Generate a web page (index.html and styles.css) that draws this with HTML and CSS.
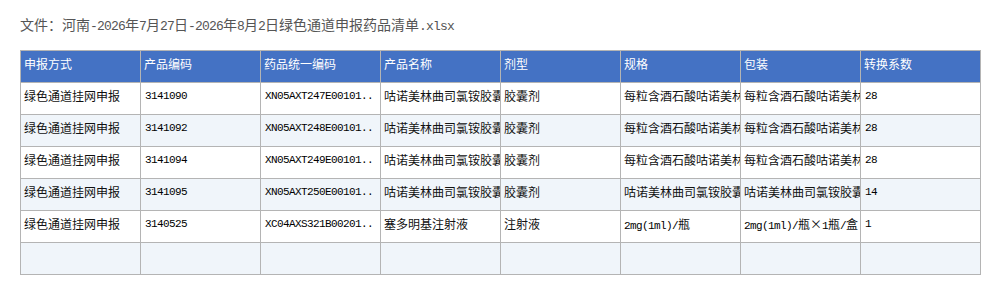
FILE: index.html
```html
<!DOCTYPE html>
<html lang="zh-CN">
<head>
<meta charset="utf-8">
<link rel="stylesheet" href="styles.css">
</head>
<body>
<div class="title">文件：河南<span class="m">-2026</span>年<span class="m">7</span>月<span class="m">27</span>日<span class="m">-2026</span>年<span class="m">8</span>月<span class="m">2</span>日绿色通道申报药品清单<span class="m">.xlsx</span></div>
<table class="grid">
<colgroup><col><col><col><col><col><col><col><col></colgroup>
<thead>
<tr><th>申报方式</th><th>产品编码</th><th>药品统一编码</th><th>产品名称</th><th>剂型</th><th>规格</th><th>包装</th><th>转换系数</th></tr>
</thead>
<tbody>
<tr><td>绿色通道挂网申报</td><td class="n">3141090</td><td class="n">XN05AXT247E00101..</td><td>咕诺美林曲司氯铵胶囊</td><td>胶囊剂</td><td>每粒含酒石酸咕诺美林</td><td>每粒含酒石酸咕诺美林</td><td class="n">28</td></tr>
<tr><td>绿色通道挂网申报</td><td class="n">3141092</td><td class="n">XN05AXT248E00101..</td><td>咕诺美林曲司氯铵胶囊</td><td>胶囊剂</td><td>每粒含酒石酸咕诺美林</td><td>每粒含酒石酸咕诺美林</td><td class="n">28</td></tr>
<tr><td>绿色通道挂网申报</td><td class="n">3141094</td><td class="n">XN05AXT249E00101..</td><td>咕诺美林曲司氯铵胶囊</td><td>胶囊剂</td><td>每粒含酒石酸咕诺美林</td><td>每粒含酒石酸咕诺美林</td><td class="n">28</td></tr>
<tr><td>绿色通道挂网申报</td><td class="n">3141095</td><td class="n">XN05AXT250E00101..</td><td>咕诺美林曲司氯铵胶囊</td><td>胶囊剂</td><td>咕诺美林曲司氯铵胶囊</td><td>咕诺美林曲司氯铵胶囊</td><td class="n">14</td></tr>
<tr><td>绿色通道挂网申报</td><td class="n">3140525</td><td class="n">XC04AXS321B00201..</td><td>塞多明基注射液</td><td>注射液</td><td><span class="m">2mg(1ml)/</span>瓶</td><td><span class="m">2mg(1ml)/</span>瓶×<span class="m">1</span>瓶<span class="m">/</span>盒</td><td class="n">1</td></tr>
<tr><td></td><td></td><td></td><td></td><td></td><td></td><td></td><td></td></tr>
</tbody>
</table>
</body>
</html>
```
FILE: styles.css
```css
html, body {
  margin: 0;
  padding: 0;
  background: #ffffff;
}
body {
  padding: 12px 20px;
  font-family: "Noto Sans CJK SC", "Noto Sans", sans-serif;
}
.title {
  font-size: 14px;
  line-height: 24px;
  height: 24px;
  color: #555555;
  margin-bottom: 14px;
  white-space: nowrap;
}
.title .m {
  font-family: "Liberation Mono", monospace;
  font-size: 13px;
  letter-spacing: -0.8px;
  line-height: 1;
}
.grid {
  border-collapse: collapse;
  table-layout: fixed;
  width: 961px;
}
.grid col {
  width: 120px;
}
.grid th,
.grid td {
  border: 1px solid #b4b4b4;
  height: 23px;
  padding: 4px 3px;
  vertical-align: top;
  text-align: left;
  white-space: nowrap;
  overflow: hidden;
  font-size: 12px;
  line-height: 18px;
  font-weight: normal;
  color: #111111;
}
.grid th {
  background: #4472c4;
  color: #ffffff;
}
.grid tbody tr:nth-child(even) td {
  background: #f0f5fa;
}
.grid td.n,
.grid td .m {
  font-family: "Liberation Mono", monospace;
  font-size: 11px;
  letter-spacing: -0.6px;
  color: #000000;
}
.grid td .m {
  line-height: 1;
}
.grid td.n {
  padding-left: 4px;
}
```
